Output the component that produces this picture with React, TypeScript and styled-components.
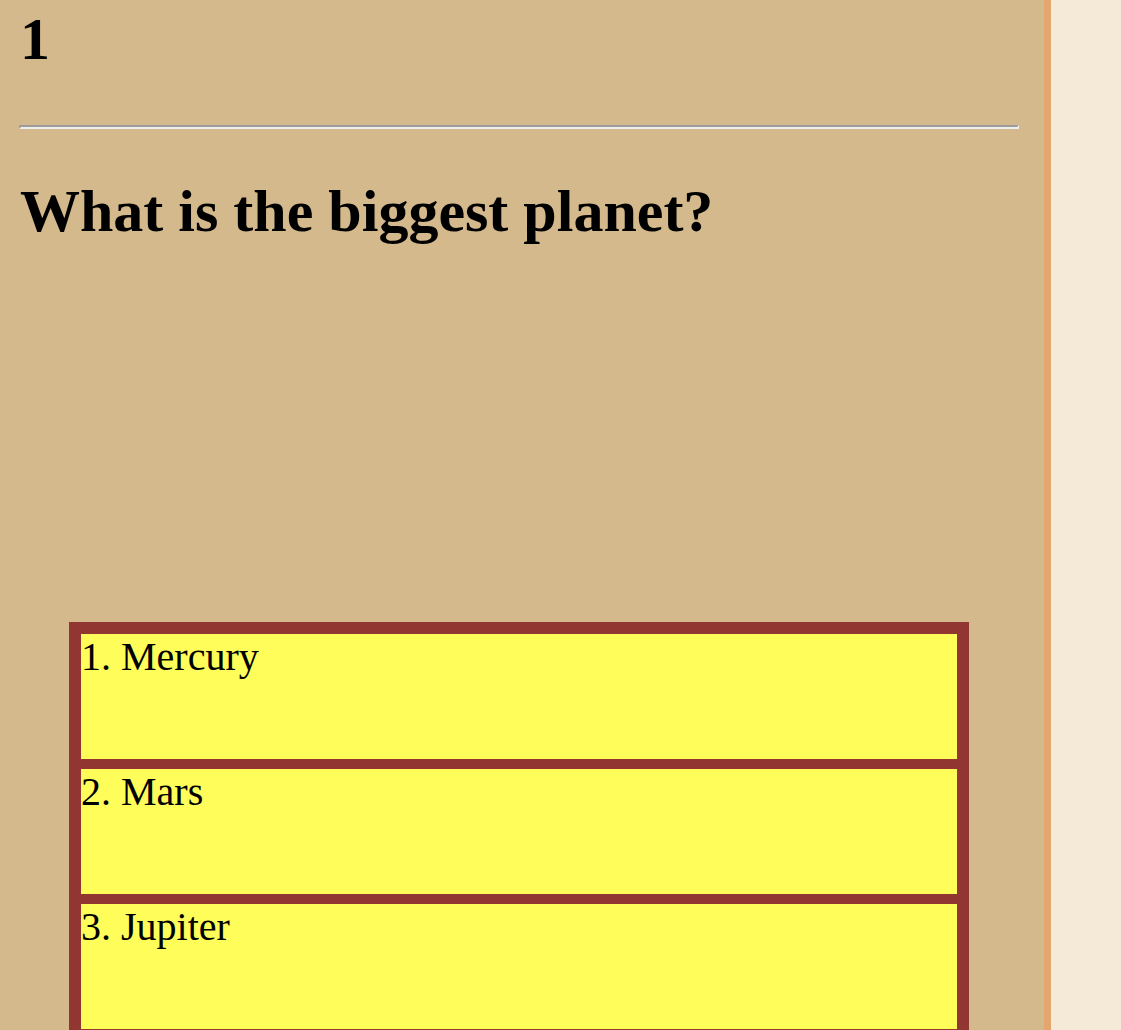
import React from "react";
import styled, { createGlobalStyle } from "styled-components";

const Global = createGlobalStyle`
  html, body {
    margin: 0;
    padding: 0;
    background: #f5ead8;
    font-family: "Liberation Serif", "Times New Roman", serif;
    color: #000;
  }
`;

const Page = styled.div`
  display: flex;
  min-height: 100vh;
`;

const Panel = styled.main`
  width: 1044px;
  flex: none;
  background: #d4b98c;
  border-right: 7px solid #e3a66e;
  padding: 0 0 40px 0;
  box-sizing: content-box;
  display: flex;
  flex-direction: column;
`;

const Number = styled.h1`
  margin: 5px 0 0 20px;
  font-size: 60px;
  line-height: 69px;
  font-weight: bold;
`;

const Rule = styled.hr`
  margin: 51px 0 0 19px;
  width: 1000px;
  height: 0;
  box-sizing: border-box;
  border-style: solid;
  border-width: 2px;
  border-color: #9c9c9c #eeeeee #eeeeee #9c9c9c;
`;

const Question = styled.h2`
  margin: 48px 0 0 20px;
  font-size: 60px;
  line-height: 69px;
  font-weight: bold;
`;

const Answers = styled.ol`
  list-style: none;
  margin: 376px 0 0 69px;
  padding: 12px;
  width: 900px;
  box-sizing: border-box;
  background: #913631;
  display: flex;
  flex-direction: column;
  gap: 10px;
`;

const Answer = styled.li`
  height: 125px;
  background: #fefd59;
  font-size: 40px;
  line-height: 46px;
  padding: 0;
`;

const options = ["Mercury", "Mars", "Jupiter"];

export default function App() {
  return (
    <>
      <Global />
      <Page>
        <Panel>
          <Number>1</Number>
          <Rule />
          <Question>What is the biggest planet?</Question>
          <Answers>
            {options.map((o, i) => (
              <Answer key={o}>
                {i + 1}. {o}
              </Answer>
            ))}
          </Answers>
        </Panel>
      </Page>
    </>
  );
}
